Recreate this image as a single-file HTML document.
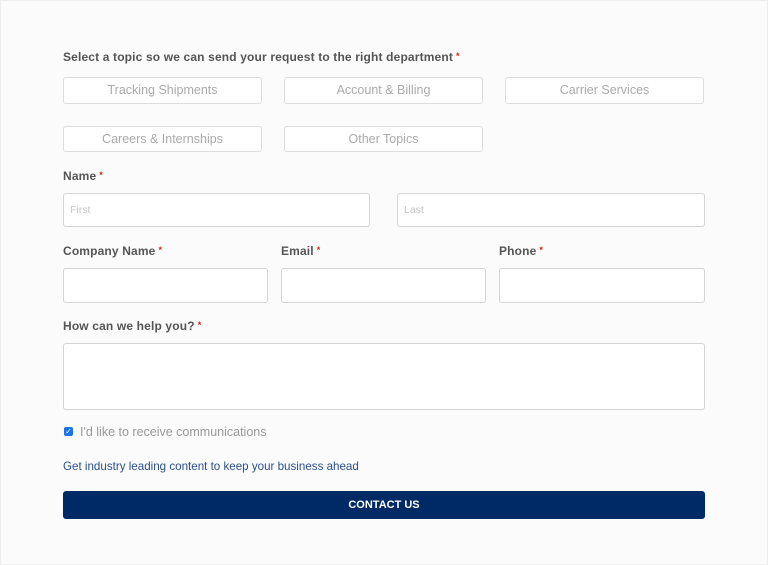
<!DOCTYPE html><html><head><style>
body{margin:0;width:768px;height:565px;background:#fafafa;font-family:"Liberation Sans",sans-serif;position:relative;overflow:hidden}
.pg{position:absolute;left:0;top:0;width:766px;height:563px;border:1px solid #eee;background:#fbfbfb}
.a{position:absolute}
.lbl{font-size:12px;font-weight:bold;color:#555;letter-spacing:.15px}
.lbl i{color:#d0281e;font-style:normal;font-size:9px;margin-left:3px;vertical-align:2px}
.btn{position:absolute;height:25px;border:1px solid #ddd;border-radius:3px;background:#fff;color:#aaa;font-size:12.5px;text-align:center;line-height:25px;box-sizing:border-box}
.in{position:absolute;border:1px solid #d4d4d4;border-radius:3px;background:#fff;box-sizing:border-box;color:#c4c4c4;font-size:10.5px;padding-left:6px}
</style></head><body><div class="pg"></div>
<div class="a lbl" style="left:63px;top:50px">Select a topic so we can send your request to the right department<i>*</i></div>
<div class="btn" style="left:63px;top:77px;width:199px;height:27px;line-height:25px">Tracking Shipments</div>
<div class="btn" style="left:284px;top:77px;width:199px;height:27px;line-height:25px">Account &amp; Billing</div>
<div class="btn" style="left:505px;top:77px;width:199px;height:27px;line-height:25px">Carrier Services</div>
<div class="btn" style="left:63px;top:126px;width:199px;height:26px">Careers &amp; Internships</div>
<div class="btn" style="left:284px;top:126px;width:199px;height:26px">Other Topics</div>
<div class="a lbl" style="left:63px;top:169px">Name<i>*</i></div>
<div class="in" style="left:63px;top:193px;width:307px;height:34px;line-height:32px">First</div>
<div class="in" style="left:397px;top:193px;width:308px;height:34px;line-height:32px">Last</div>
<div class="a lbl" style="left:63px;top:244px">Company Name<i>*</i></div>
<div class="a lbl" style="left:281px;top:244px">Email<i>*</i></div>
<div class="a lbl" style="left:499px;top:244px">Phone<i>*</i></div>
<div class="in" style="left:63px;top:268px;width:205px;height:35px"></div>
<div class="in" style="left:281px;top:268px;width:205px;height:35px"></div>
<div class="in" style="left:499px;top:268px;width:206px;height:35px"></div>
<div class="a lbl" style="left:63px;top:319px">How can we help you?<i>*</i></div>
<div class="in" style="left:63px;top:343px;width:642px;height:67px"></div>
<div class="a" style="left:64px;top:427px;width:9px;height:9px;background:#1a73e8;border-radius:2px;color:#fff;font-size:8px;line-height:9px;text-align:center">✓</div>
<div class="a" style="left:80px;top:425px;font-size:12.5px;color:#999">I'd like to receive communications</div>
<div class="a" style="left:63px;top:460px;font-size:11.6px;color:#2c4f86">Get industry leading content to keep your business ahead</div>
<div class="a" style="left:63px;top:491px;width:642px;height:28px;background:#002a65;border-radius:3px;color:#fff;font-size:11px;font-weight:bold;text-align:center;line-height:28px">CONTACT US</div>
</body></html>
